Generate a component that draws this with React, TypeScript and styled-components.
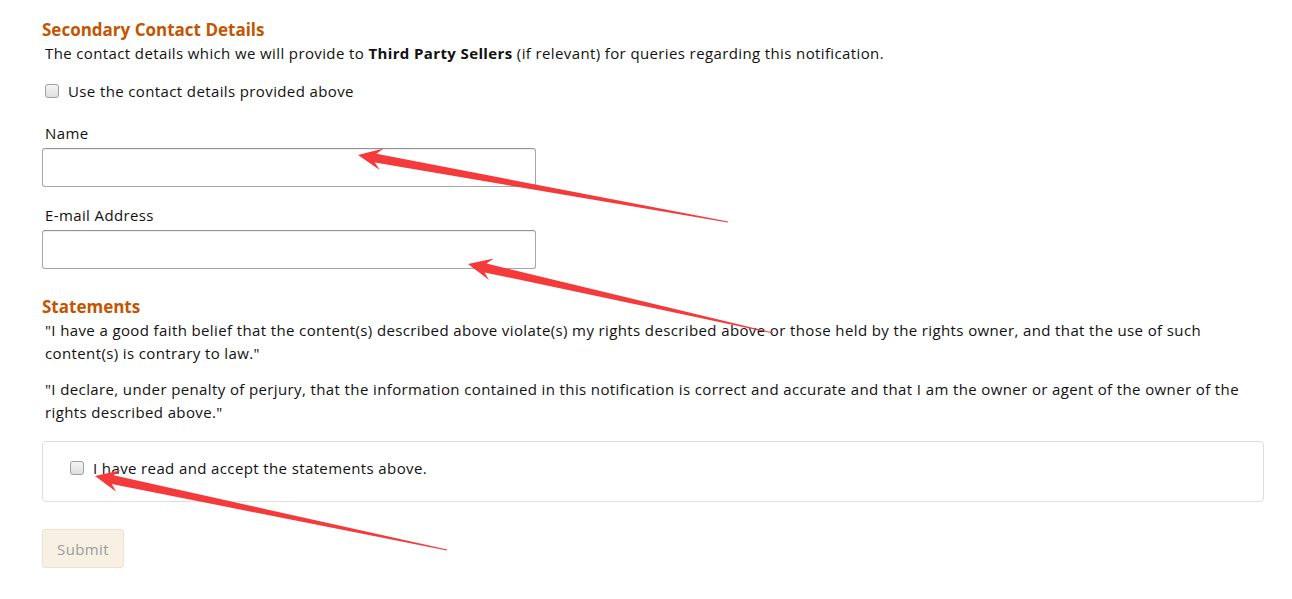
import React from "react";
import styled, { createGlobalStyle } from "styled-components";

const Global = createGlobalStyle`
  html, body { margin: 0; padding: 0; background: #fff; }
  body { font-family: "Open Sans", "Noto Sans", Arial, sans-serif; color: #111; }
`;

const Page = styled.div`
  position: relative;
  width: 1292px;
  height: 599px;
  box-sizing: border-box;
  padding: 18px 28px 0 42px;
  overflow: hidden;
`;

const Heading = styled.h3`
  margin: 0;
  font-size: 17px;
  line-height: 24px;
  font-weight: 700;
  color: #c45500;
`;

const Text = styled.p<{ $indent?: number; $gap?: number }>`
  margin: ${(p) => p.$gap ?? 0}px 0 0 ${(p) => p.$indent ?? 0}px;
  font-size: 15px;
  letter-spacing: 0.38px;
  line-height: 23px;
  color: #111;
`;

const CheckRow = styled.label<{ $gap?: number; $indent?: number }>`
  display: flex;
  align-items: center;
  gap: 9px;
  margin: ${(p) => p.$gap ?? 0}px 0 0 ${(p) => p.$indent ?? 0}px;
  font-size: 15px;
  letter-spacing: 0.38px;
  line-height: 22px;
  color: #111;
`;

const Check = styled.input.attrs({ type: "checkbox" })`
  appearance: none;
  margin: 0;
  width: 14px;
  height: 14px;
  box-sizing: border-box;
  border: 1px solid #a0a0a0;
  border-radius: 3px;
  background: linear-gradient(#f4f4f4, #dedede);
`;

const Field = styled.div<{ $gap: number }>`
  display: flex;
  flex-direction: column;
  margin-top: ${(p) => p.$gap}px;
`;

const FieldLabel = styled.label`
  margin-left: 3px;
  font-size: 15px;
  letter-spacing: 0.38px;
  line-height: 22px;
  margin-bottom: 4px;
`;

const Input = styled.input`
  width: 494px;
  height: 39px;
  box-sizing: border-box;
  border: 1px solid #a6a6a6;
  border-top-color: #949494;
  border-radius: 3px;
  box-shadow: 0 1px 0 rgba(0, 0, 0, 0.07) inset;
  padding: 0 7px;
  font: inherit;
`;

const Section = styled.div<{ $gap: number }>`
  margin-top: ${(p) => p.$gap}px;
`;

const Statements = styled.div`
  width: 1219px;
  margin-left: 3px;
`;

const AcceptBox = styled.div`
  margin-top: 17px;
  width: 1222px;
  height: 61px;
  box-sizing: border-box;
  border: 1px solid #dddddd;
  border-radius: 4px;
  display: flex;
  align-items: flex-start;
  padding: 15px 0 0 27px;
`;

const SubmitButton = styled.button`
  margin-top: 27px;
  width: 82px;
  height: 39px;
  box-sizing: border-box;
  border: 1px solid #ece3cf;
  border-radius: 3px;
  background: #f8f1e3;
  color: #9b9b9b;
  font-family: inherit;
  font-size: 15px;
  letter-spacing: 0.38px;
  padding: 0;
`;

const Overlay = styled.svg`
  position: absolute;
  left: 0;
  top: 0;
  pointer-events: none;
`;

function arrowPoints(tx: number, ty: number, ex: number, ey: number) {
  const dx = ex - tx;
  const dy = ey - ty;
  const len = Math.hypot(dx, dy);
  const ux = dx / len;
  const uy = dy / len;
  const nx = -uy;
  const ny = ux;
  const headLen = 24;
  const headW = 11;
  const neck = 18;
  const shaftW = 4.5;
  const bx = tx + ux * headLen;
  const by = ty + uy * headLen;
  const kx = tx + ux * neck;
  const ky = ty + uy * neck;
  const pts = [
    [tx, ty],
    [bx + nx * headW, by + ny * headW],
    [kx + nx * shaftW, ky + ny * shaftW],
    [ex + nx * 0.4, ey + ny * 0.4],
    [ex - nx * 0.4, ey - ny * 0.4],
    [kx - nx * shaftW, ky - ny * shaftW],
    [bx - nx * headW, by - ny * headW],
  ];
  return pts.map((p) => p.map((v) => v.toFixed(1)).join(",")).join(" ");
}

const arrows = [
  { tx: 358, ty: 155, ex: 728, ey: 222 },
  { tx: 468, ty: 264, ex: 773, ey: 333 },
  { tx: 95, ty: 476, ex: 447, ey: 550 },
];

export default function App() {
  return (
    <Page>
      <Global />
      <Heading>Secondary Contact Details</Heading>
      <Text $indent={3}>
        The contact details which we will provide to <b>Third Party Sellers</b> (if relevant) for queries regarding
        this notification.
      </Text>
      <CheckRow $gap={15} $indent={3}>
        <Check />
        Use the contact details provided above
      </CheckRow>
      <Field $gap={20}>
        <FieldLabel>Name</FieldLabel>
        <Input />
      </Field>
      <Field $gap={17}>
        <FieldLabel>E-mail Address</FieldLabel>
        <Input />
      </Field>
      <Section $gap={26}>
        <Heading>Statements</Heading>
        <Statements>
          <Text>
            "I have a good faith belief that the content(s) described above violate(s) my rights described above or
            those held by the rights owner, and that the use of such content(s) is contrary to law."
          </Text>
          <Text $gap={13}>
            "I declare, under penalty of perjury, that the information contained in this notification is correct and
            accurate and that I am the owner or agent of the owner of the rights described above."
          </Text>
        </Statements>
      </Section>
      <AcceptBox>
        <CheckRow>
          <Check />
          I have read and accept the statements above.
        </CheckRow>
      </AcceptBox>
      <SubmitButton disabled>Submit</SubmitButton>
      <Overlay width={1292} height={599} viewBox="0 0 1292 599">
        {arrows.map((a, i) => (
          <polygon key={i} points={arrowPoints(a.tx, a.ty, a.ex, a.ey)} fill="#f43a3a" />
        ))}
      </Overlay>
    </Page>
  );
}
